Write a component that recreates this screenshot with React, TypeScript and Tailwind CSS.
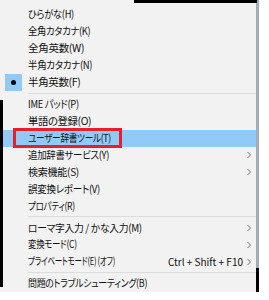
import React, { useLayoutEffect, useRef, useState } from "react";

type Item =
  | { kind: "sep" }
  | {
      kind: "item";
      label: string;
      w: number;
      arrow?: boolean;
      shortcut?: string;
      checked?: boolean;
      active?: boolean;
    };

const items: Item[] = [
  { kind: "item", label: "ひらがな(H)", w: 46 },
  { kind: "item", label: "全角カタカナ(K)", w: 62 },
  { kind: "item", label: "全角英数(W)", w: 56 },
  { kind: "item", label: "半角カタカナ(N)", w: 64 },
  { kind: "item", label: "半角英数(F)", w: 52, checked: true },
  { kind: "sep" },
  { kind: "item", label: "IME パッド(P)", w: 51 },
  { kind: "item", label: "単語の登録(O)", w: 63 },
  { kind: "item", label: "ユーザー辞書ツール(T)", w: 83, active: true },
  { kind: "item", label: "追加辞書サービス(Y)", w: 81, arrow: true },
  { kind: "item", label: "検索機能(S)", w: 51, arrow: true },
  { kind: "item", label: "誤変換レポート(V)", w: 72 },
  { kind: "item", label: "プロパティ(R)", w: 47 },
  { kind: "sep" },
  { kind: "item", label: "ローマ字入力 / かな入力(M)", w: 114, arrow: true },
  { kind: "item", label: "変換モード(C)", w: 49, arrow: true },
  { kind: "item", label: "プライベートモード(E) (オフ)", w: 87, arrow: true, shortcut: "Ctrl + Shift + F10" },
  { kind: "sep" },
  { kind: "item", label: "問題のトラブルシューティング(B)", w: 119 },
];

function FitText({ text, target, className }: { text: string; target: number; className?: string }) {
  const ref = useRef<HTMLSpanElement>(null);
  const [fit, setFit] = useState({ ls: 0, sx: 1 });
  useLayoutEffect(() => {
    const measure = () => {
      const el = ref.current;
      if (!el) return;
      const n = Array.from(text).length;
      const cur = parseFloat(getComputedStyle(el).letterSpacing) || 0;
      const w0 = el.offsetWidth - cur * n;
      if (target >= w0) {
        setFit({ ls: (target - w0) / n, sx: 1 });
      } else {
        const ls = Math.max((target - w0) / n, -0.35);
        const w1 = w0 + ls * n;
        setFit({ ls, sx: target / w1 });
      }
    };
    measure();
    if (document.fonts && document.fonts.ready) document.fonts.ready.then(measure);
  }, [text, target]);
  return (
    <span
      ref={ref}
      className={`inline-block origin-left ${className ?? ""}`}
      style={{ letterSpacing: `${fit.ls}px`, transform: `scaleX(${fit.sx})` }}
    >
      {text}
    </span>
  );
}

function Arrow() {
  return (
    <svg width="6" height="8" viewBox="0 0 6 8" className="shrink-0">
      <path d="M1.5 1 L4.5 4 L1.5 7" fill="none" stroke="#707070" strokeWidth="1" />
    </svg>
  );
}

export default function App() {
  return (
    <div
      className="w-[269px] h-[300px] bg-white relative overflow-hidden text-[10.5px] text-[#111]"
      style={{ fontFamily: '"Noto Sans CJK JP", "Noto Sans", sans-serif', fontFeatureSettings: '"palt" 1' }}
    >
      <div className="absolute left-[134px] top-0 w-[123px] h-[3px] bg-black z-10" />
      <div className="w-[259px] h-[292px] bg-[#f2f2f2] border-r-[3px] border-r-[#a4acba] flex relative">
        <div className="w-[3px] shrink-0 flex flex-col">
          <div className="h-[100px]" />
          <div className="h-[187px] bg-black" />
        </div>
        <div className="flex-1 min-w-0 flex flex-col pt-[6px]">
          {items.map((it, i) =>
            it.kind === "sep" ? (
              <div key={i} className="h-[5px] flex items-center pl-[25px]">
                <div className="h-px w-full bg-[#dcdcdc]" />
              </div>
            ) : (
              <div
                key={i}
                className={`h-[17px] flex items-center relative ${it.active ? "bg-[#91c9f7]" : ""}`}
              >
                <div className="w-[25px] shrink-0 h-full flex items-center pl-[2px]">
                  {it.checked && (
                    <div className="w-[17px] h-[17px] bg-[#91c9f7] flex items-center justify-center">
                      <div className="w-[5px] h-[5px] rounded-full bg-black" />
                    </div>
                  )}
                </div>
                <FitText text={it.label} target={it.w} className="whitespace-nowrap leading-none" />
                <div className="flex-1" />
                {it.shortcut && (
                  <span className="whitespace-nowrap leading-none mr-[3px] text-[10px]">{it.shortcut}</span>
                )}
                <div className="w-[10px] shrink-0 flex items-center">{it.arrow && <Arrow />}</div>
                {it.active && (
                  <div className="absolute left-[10px] top-[-2px] w-[109px] h-[20px] border-[3px] border-[#e5202a]" />
                )}
              </div>
            )
          )}
        </div>
        <div className="absolute right-[-3px] top-[268px] w-[3px] h-[24px] bg-black" />
      </div>
    </div>
  );
}
